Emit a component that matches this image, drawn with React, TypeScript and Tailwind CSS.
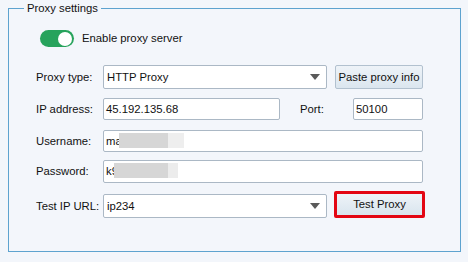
import React, { useState } from 'react';

const Caret: React.FC = () => (
  <svg width="10" height="6" viewBox="0 0 10 6" className="shrink-0">
    <path d="M0 0 H10 L5 6 Z" fill="#5a5a5a" />
  </svg>
);

const Field: React.FC<{ children?: React.ReactNode; className?: string }> = ({ children, className }) => (
  <div
    className={
      'h-[22px] flex items-center bg-white border border-[#abb8c5] rounded-[2px] px-[2px] text-[#111] relative ' +
      (className || '')
    }
  >
    {children}
  </div>
);

const Select: React.FC<{ value: string }> = ({ value }) => (
  <div className="w-[224px] h-[24px] flex items-center justify-between bg-white border border-[#abb8c5] rounded-[2px] pl-[3px] pr-[6px] text-[#111]">
    <span>{value}</span>
    <Caret />
  </div>
);

const Row: React.FC<{ label: string; className?: string; children: React.ReactNode }> = ({ label, className, children }) => (
  <div className={'flex items-center ' + (className || '')}>
    <span className="w-[67px] shrink-0 text-[#111]">{label}</span>
    {children}
  </div>
);

const App: React.FC = () => {
  const [enabled, setEnabled] = useState(true);

  return (
    <div
      className="w-[468px] h-[262px] bg-[#f3f6fb] overflow-hidden text-[11.3px]"
      style={{ fontFamily: '"Liberation Sans", Arial, sans-serif' }}
    >
      <fieldset className="ml-2 w-[453px] h-[252px] border border-[#5ea3cf] p-0 m-0">
        <legend className="ml-[15px] px-[3px] h-[16px] leading-[16px] text-[11.3px] text-[#111]">Proxy settings</legend>

        {/* toggle */}
        <div className="flex items-center mt-[14px] ml-[31px]">
          <button
            onClick={() => setEnabled(!enabled)}
            className={
              'w-[34px] h-[17px] rounded-full flex items-center px-[2px] ' +
              (enabled ? 'bg-[#27a35c] justify-end' : 'bg-[#b8b8b8] justify-start')
            }
          >
            <span className="w-[14px] h-[14px] rounded-full bg-white block" />
          </button>
          <span className="ml-[8px] text-[#111]">Enable proxy server</span>
        </div>

        <div className="ml-[27px] flex flex-col">
          <Row label="Proxy type:" className="mt-[18px]">
            <Select value="HTTP Proxy" />
            <button className="ml-[8px] w-[88px] h-[24px] rounded-[2px] border border-[#b2c1cf] bg-gradient-to-b from-[#eef3f8] to-[#dbe6ef] text-[#111]">
              Paste proxy info
            </button>
          </Row>

          <Row label="IP address:" className="mt-[9px]">
            <Field className="w-[177px]">45.192.135.68</Field>
            <span className="ml-[20px] w-[53px] text-[#111]">Port:</span>
            <Field className="w-[70px]">50100</Field>
          </Row>

          <Row label="Username:" className="mt-[10px]">
            <Field className="w-[320px]">
              <span>ma</span>
              <span className="absolute left-[15px] top-[2px] w-[49px] h-[15px] bg-[#d6d6d6]" />
              <span className="absolute left-[64px] top-[2px] w-[16px] h-[15px] bg-[#eeeeee]" />
            </Field>
          </Row>

          <Row label="Password:" className="mt-[8px]">
            <Field className="w-[320px] h-[23px]">
              <span>k9</span>
              <span className="absolute left-[10px] top-[2px] w-[54px] h-[15px] bg-[#d6d6d6]" />
              <span className="absolute left-[64px] top-[2px] w-[10px] h-[15px] bg-[#ececec]" />
            </Field>
          </Row>

          <Row label="Test IP URL:" className="mt-[11px]">
            <Select value="ip234" />
            <div className="ml-[7px] -mt-[4px] w-[91px] h-[27px] border-[3px] border-[#e30613] rounded-[2px]">
              <button className="w-full h-full bg-gradient-to-b from-[#eef3f8] to-[#d9e5ee] text-[#111]">
                Test Proxy
              </button>
            </div>
          </Row>
        </div>
      </fieldset>
    </div>
  );
};

export default App;
